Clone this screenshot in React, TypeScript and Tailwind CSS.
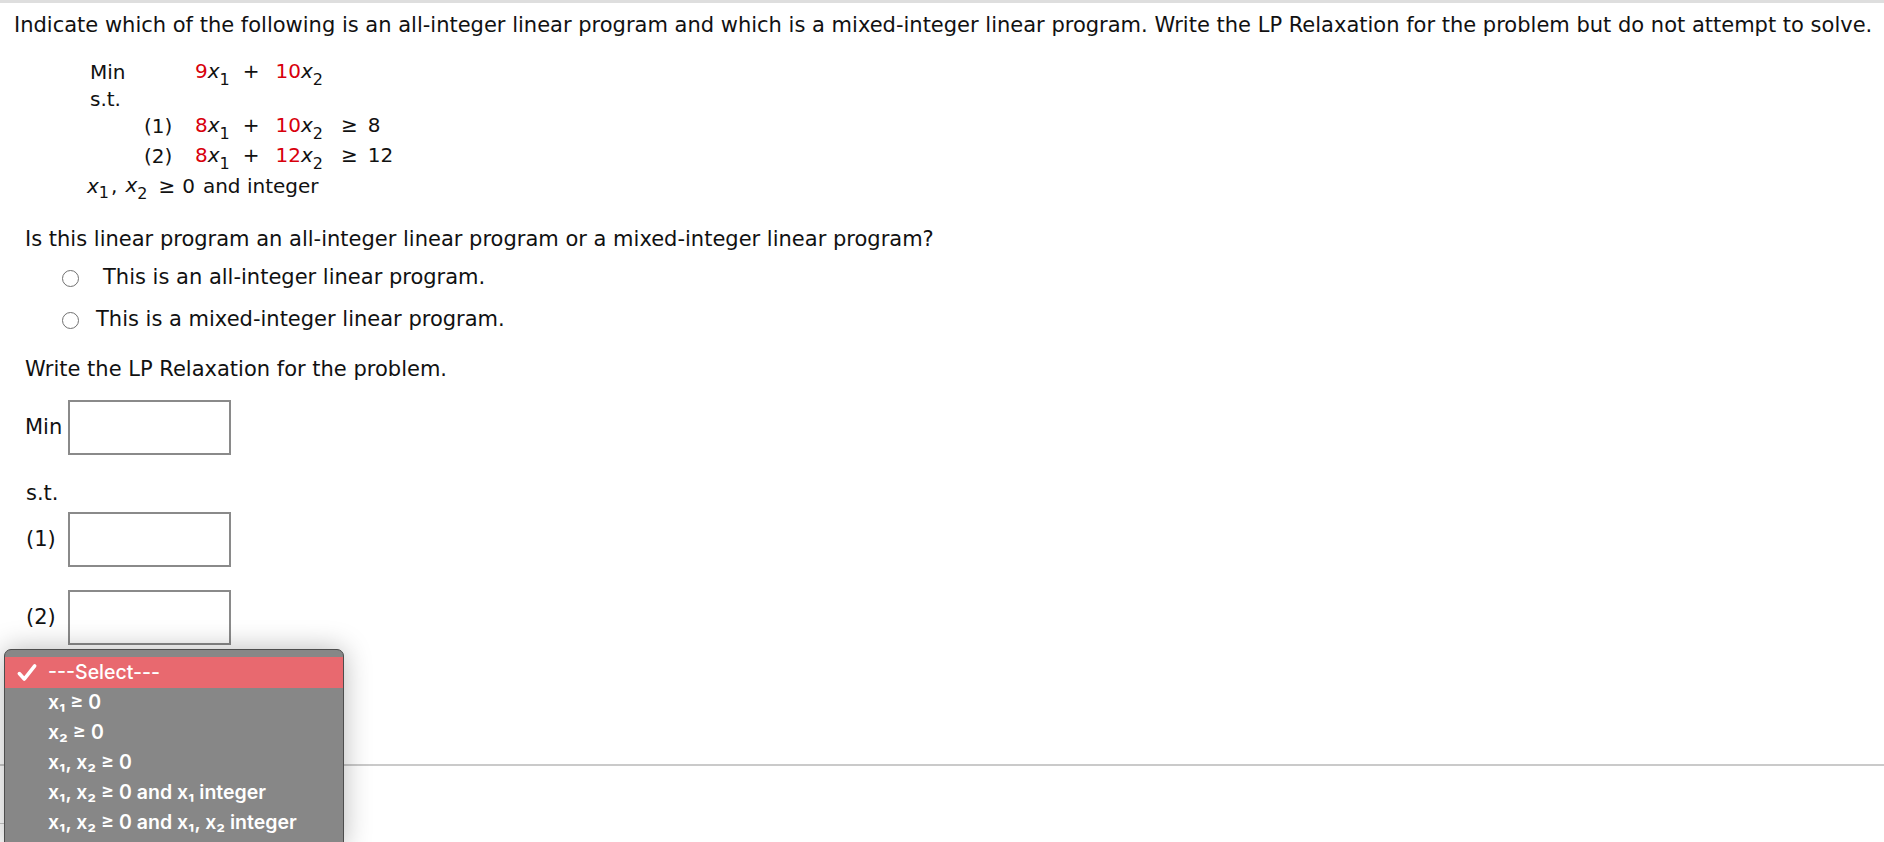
import React from "react";

const red = "text-[#d8000c]";

const Sub = ({ children }: { children: React.ReactNode }) => (
  <span className="relative top-[7px] text-[16px]">{children}</span>
);

const X = ({ n }: { n: string }) => (
  <>
    <span className="italic">x</span>
    <Sub>{n}</Sub>
  </>
);

const Radio = () => (
  <span className="inline-block w-[17px] h-[17px] rounded-full border-[1.5px] border-[#717171] bg-white shrink-0"></span>
);

const Box = () => <div className="w-[163px] h-[55px] border-2 border-[#8a8a8a] bg-white"></div>;

const options = [
  "x₁ ≥ 0",
  "x₂ ≥ 0",
  "x₁, x₂ ≥ 0",
  "x₁, x₂ ≥ 0 and x₁ integer",
  "x₁, x₂ ≥ 0 and x₁, x₂ integer",
];

const App = () => {
  return (
    <div className="relative w-[1884px] h-[842px] overflow-hidden bg-white text-[#111] font-['DejaVu_Sans',sans-serif] text-[21px]">
      <div className="h-[3px] bg-[#dedede]"></div>

      {/* question text */}
      <p className="mt-[10px] pl-[14px] leading-[24px] whitespace-nowrap">
        Indicate which of the following is an all-integer linear program and which is a mixed-integer linear program. Write the LP Relaxation for the problem but do not attempt to solve.
      </p>

      {/* the integer program */}
      <div className="mt-[22px] leading-[26px] text-[20px]">
        <div className="flex h-[26px] items-center pl-[90px]">
          <span className="w-[105px]">Min</span>
          <span className="whitespace-pre">
            <span className={red}>9</span>
            <X n="1" />
            <span className="ml-[13px]">+</span>
            <span className={`ml-[16px] ${red}`}>10</span>
            <X n="2" />
          </span>
        </div>
        <div className="flex h-[27px] items-center pl-[90px]">s.t.</div>
        <div className="flex h-[28px] items-center pl-[144px]">
          <span className="w-[51px]">(1)</span>
          <span className="whitespace-pre">
            <span className={red}>8</span>
            <X n="1" />
            <span className="ml-[13px]">+</span>
            <span className={`ml-[16px] ${red}`}>10</span>
            <X n="2" />
            <span className="ml-[18px]">≥</span>
            <span className="ml-[10px]">8</span>
          </span>
        </div>
        <div className="flex h-[31px] items-center pl-[144px]">
          <span className="w-[51px]">(2)</span>
          <span className="whitespace-pre">
            <span className={red}>8</span>
            <X n="1" />
            <span className="ml-[13px]">+</span>
            <span className={`ml-[16px] ${red}`}>12</span>
            <X n="2" />
            <span className="ml-[18px]">≥</span>
            <span className="ml-[10px]">12</span>
          </span>
        </div>
        <div className="flex h-[30px] items-center pl-[87px] whitespace-pre">
          <X n="1" />
          <span className="ml-[2px]">,</span>
          <span className="ml-[8px]">
            <X n="2" />
          </span>
          <span className="ml-[11px]">≥</span>
          <span className="ml-[7px]">0</span>
          <span className="ml-[8px]">and integer</span>
        </div>
      </div>

      <p className="mt-[26px] pl-[25px] leading-[24px]">
        Is this linear program an all-integer linear program or a mixed-integer linear program?
      </p>
      <div className="mt-[12px] flex h-[30px] items-center pl-[62px]">
        <Radio />
        <span className="ml-[24px]">This is an all-integer linear program.</span>
      </div>
      <div className="mt-[12px] flex h-[30px] items-center pl-[62px]">
        <Radio />
        <span className="ml-[17px]">This is a mixed-integer linear program.</span>
      </div>

      <p className="mt-[22px] pl-[25px] leading-[24px]">Write the LP Relaxation for the problem.</p>

      {/* LP relaxation inputs */}
      <div className="mt-[19px] flex items-center pl-[25px]">
        <span className="w-[43px]">Min</span>
        <Box />
      </div>
      <div className="mt-[26px] pl-[26px] leading-[24px]">s.t.</div>
      <div className="mt-[7px] flex items-center pl-[26px]">
        <span className="w-[42px]">(1)</span>
        <Box />
      </div>
      <div className="mt-[23px] flex items-center pl-[26px]">
        <span className="w-[42px]">(2)</span>
        <Box />
      </div>

      <div className="mt-[119px] h-[2px] bg-[#cacaca]"></div>
      <div className="mt-[57px] w-[300px] h-px bg-[#cacaca]"></div>

      {/* open select menu */}
      <div className="absolute left-[4px] top-[649px] w-[340px] h-[200px] rounded-[7px] border border-[#4d4d4d] bg-[#878787] pt-[7px] shadow-[0_0_28px_rgba(0,0,0,0.28)] font-['Inter',sans-serif] text-[19.5px] font-semibold text-white">
        <div className="flex h-[31px] items-center bg-[#e8696f]">
          <svg className="ml-[11px] w-[22px] h-[22px]" viewBox="0 0 20 20" fill="none">
            <path d="M3 10.5 L7.5 15.5 L17 3.5" stroke="white" strokeWidth="3.2" strokeLinecap="round" strokeLinejoin="round" />
          </svg>
          <span className="ml-[10px] font-medium">---Select---</span>
        </div>
        {options.map((o) => (
          <div key={o} className="flex h-[30px] items-center pl-[43px] whitespace-pre">
            {o}
          </div>
        ))}
      </div>
    </div>
  );
};

export default App;
